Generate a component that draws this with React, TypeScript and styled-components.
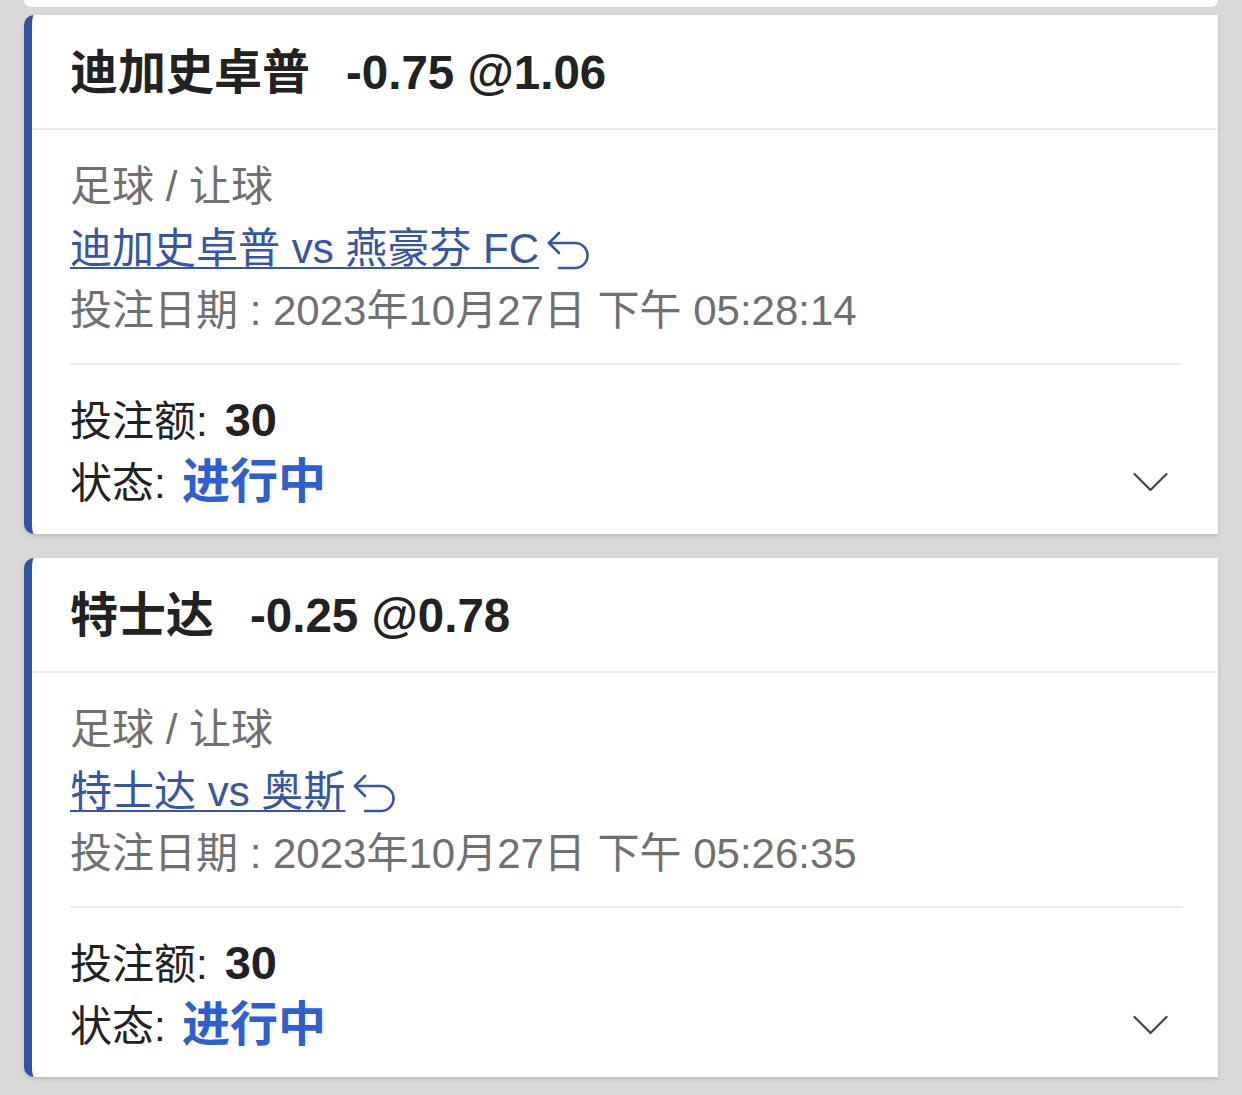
import React from 'react';
import styled, { createGlobalStyle } from 'styled-components';

const GlobalStyle = createGlobalStyle`
  html, body {
    margin: 0;
    padding: 0;
    background: #d9d9d9;
  }
  body {
    font-family: "Liberation Sans", "Noto Sans CJK SC", sans-serif;
    -webkit-font-smoothing: antialiased;
  }
`;

const Page = styled.div`
  padding: 0 24px;
  min-height: 1095px;
  box-sizing: border-box;
`;

const PrevCardTail = styled.div`
  height: 7px;
  background: #fff;
  border-radius: 0 0 10px 10px;
  margin-bottom: 8px;
`;

const List = styled.div`
  display: flex;
  flex-direction: column;
  gap: 24px;
`;

const Card = styled.article`
  background: #fff;
  border-left: 8px solid #2f54a5;
  border-radius: 10px 0 0 10px;
  box-shadow: 0 2px 4px rgba(0, 0, 0, 0.14);
  overflow: hidden;
`;

const Header = styled.div`
  padding: 29px 38px 26px;
  border-bottom: 2px solid #eeeeee;
  font-size: 48px;
  line-height: 58px;
  font-weight: 700;
  color: #222;
  white-space: nowrap;
`;

const Odds = styled.span`
  margin-left: 36px;
  font-size: 47.5px;
`;

const Body = styled.div`
  padding: 26px 36px 0 38px;
`;

const MetaLine = styled.div`
  font-size: 42px;
  line-height: 62px;
  color: #707070;
  white-space: nowrap;
`;

const MatchLink = styled.a`
  color: #3556a8;
  text-decoration: underline;
  text-decoration-thickness: 2px;
  text-underline-offset: 4px;
`;

const LinkIcon = styled.svg`
  width: 42px;
  height: 40px;
  margin-left: 8px;
  vertical-align: -7px;
`;

const Divider = styled.div`
  height: 2px;
  background: #ececec;
  margin-top: 21px;
`;

const Footer = styled.div`
  display: flex;
  justify-content: space-between;
  align-items: flex-end;
  padding: 25px 36px 20px 38px;
`;

const Summary = styled.div`
  display: flex;
  flex-direction: column;
`;

const SummaryLine = styled.div`
  font-size: 42px;
  line-height: 60px;
  color: #222;
  white-space: nowrap;
`;

const Amount = styled.strong`
  font-size: 47px;
  font-weight: 700;
  margin-left: 4px;
`;

const Status = styled.strong`
  font-size: 48px;
  font-weight: 700;
  color: #2d5ed2;
  margin-left: 3px;
`;

const ToggleButton = styled.button`
  border: none;
  background: none;
  padding: 0;
  margin: 0 14px 2px 0;
  height: 60px;
  display: flex;
  align-items: center;
  cursor: pointer;
`;

const Chevron = styled.svg`
  width: 35px;
  height: 20px;
`;

type Bet = {
  team: string;
  odds: string;
  match: string;
  date: string;
};

const bets: Bet[] = [
  {
    team: '迪加史卓普',
    odds: '-0.75 @1.06',
    match: '迪加史卓普 vs 燕豪芬 FC',
    date: '投注日期 : 2023年10月27日 下午 05:28:14',
  },
  {
    team: '特士达',
    odds: '-0.25 @0.78',
    match: '特士达 vs 奥斯',
    date: '投注日期 : 2023年10月27日 下午 05:26:35',
  },
];

const BetCard: React.FC<{ bet: Bet }> = ({ bet }) => (
  <Card>
    <Header>
      {bet.team}
      <Odds>{bet.odds}</Odds>
    </Header>
    <Body>
      <MetaLine>足球 / 让球</MetaLine>
      <MetaLine>
        <MatchLink href="#">{bet.match}</MatchLink>
        <LinkIcon viewBox="0 0 42 40" fill="none" stroke="#3556a8" strokeWidth="2.6" strokeLinecap="round" strokeLinejoin="round">
          <path d="M12 3 L2 13 L12 23" />
          <path d="M2 13 H28 A12.5 12.5 0 0 1 28 38 H12" />
        </LinkIcon>
      </MetaLine>
      <MetaLine>{bet.date}</MetaLine>
      <Divider />
    </Body>
    <Footer>
      <Summary>
        <SummaryLine>
          投注额:<Amount> 30</Amount>
        </SummaryLine>
        <SummaryLine>
          状态:<Status> 进行中</Status>
        </SummaryLine>
      </Summary>
      <ToggleButton aria-label="展开">
        <Chevron viewBox="0 0 35 20" fill="none" stroke="#444" strokeWidth="2.2" strokeLinecap="round" strokeLinejoin="round">
          <path d="M1.5 2 L17.5 18 L33.5 2" />
        </Chevron>
      </ToggleButton>
    </Footer>
  </Card>
);

export default function App() {
  return (
    <>
      <GlobalStyle />
      <Page>
        <PrevCardTail />
        <List>
          {bets.map((b) => (
            <BetCard key={b.team} bet={b} />
          ))}
        </List>
      </Page>
    </>
  );
}
